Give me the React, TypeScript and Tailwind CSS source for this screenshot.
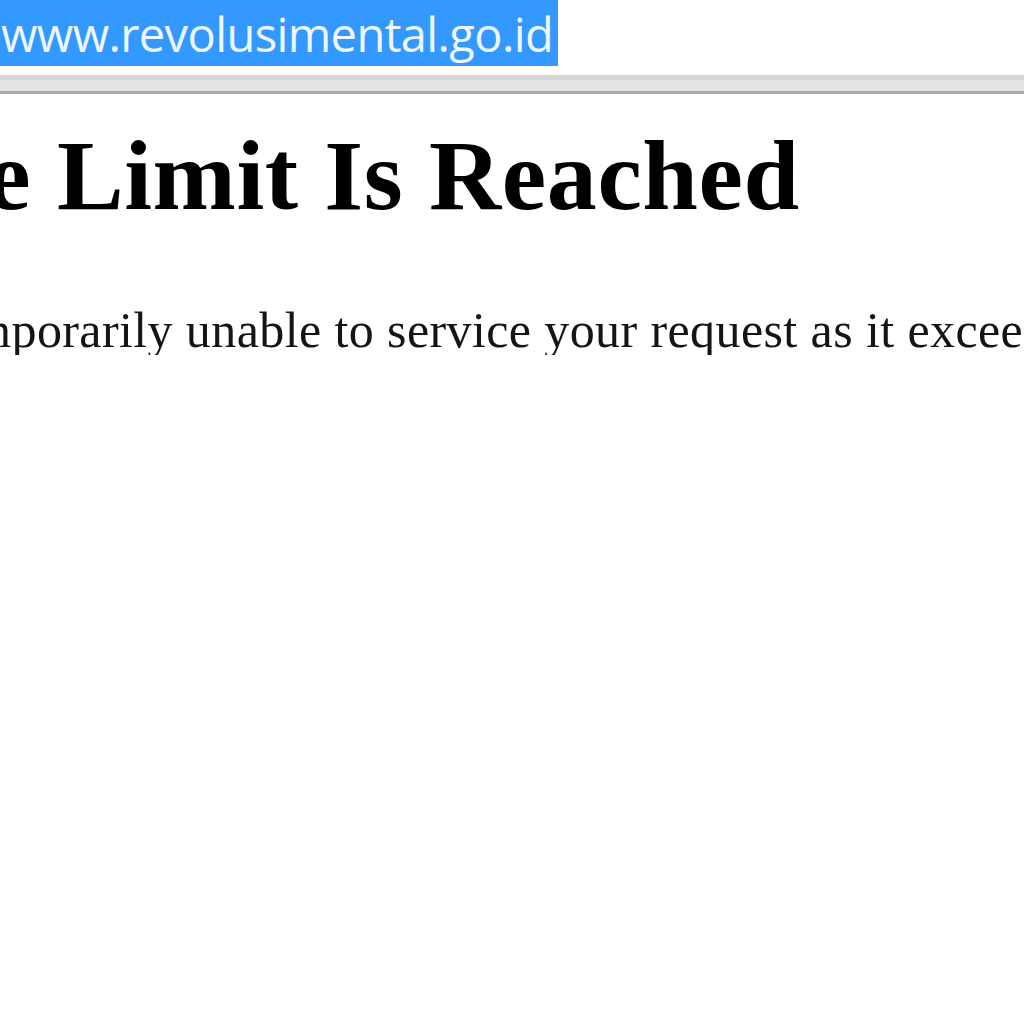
export default function App() {
  return (
    <div className="w-[1024px] h-[1024px] bg-white overflow-hidden">
      {/* address bar, url selected */}
      <div className="h-[75px] bg-white">
        <div className="h-[66px] w-[558px] bg-[#3399ff] overflow-hidden">
          <div
            className="whitespace-nowrap text-[47px] leading-none text-[#eef7ff] pt-[11px] ml-[1px] tracking-[-0.6px]"
            style={{ fontFamily: '"Open Sans", "Noto Sans", sans-serif' }}
          >
            www.revolusimental.go.id
          </div>
        </div>
      </div>
      <div className="h-[19px] bg-[#e4e4e4] border-t-[5px] border-t-[#d6d6d6] border-b-[3px] border-b-[#a9a9a9]" />

      {/* page body */}
      <div
        className="overflow-hidden text-black"
        style={{ fontFamily: '"Liberation Serif", "Times New Roman", serif' }}
      >
        <h1 className="mt-[32px] ml-[-366px] whitespace-nowrap text-[100px] leading-none font-bold tracking-[0.6px]">
          Resource Limit Is Reached
        </h1>
        <p className="mt-[79px] ml-[-372px] whitespace-nowrap text-[50px] leading-none text-[#151515] tracking-[0.4px]">
          The website is temporarily unable to service your request as it exceeded resource limit. Please try again later.
        </p>
      </div>
    </div>
  );
}
